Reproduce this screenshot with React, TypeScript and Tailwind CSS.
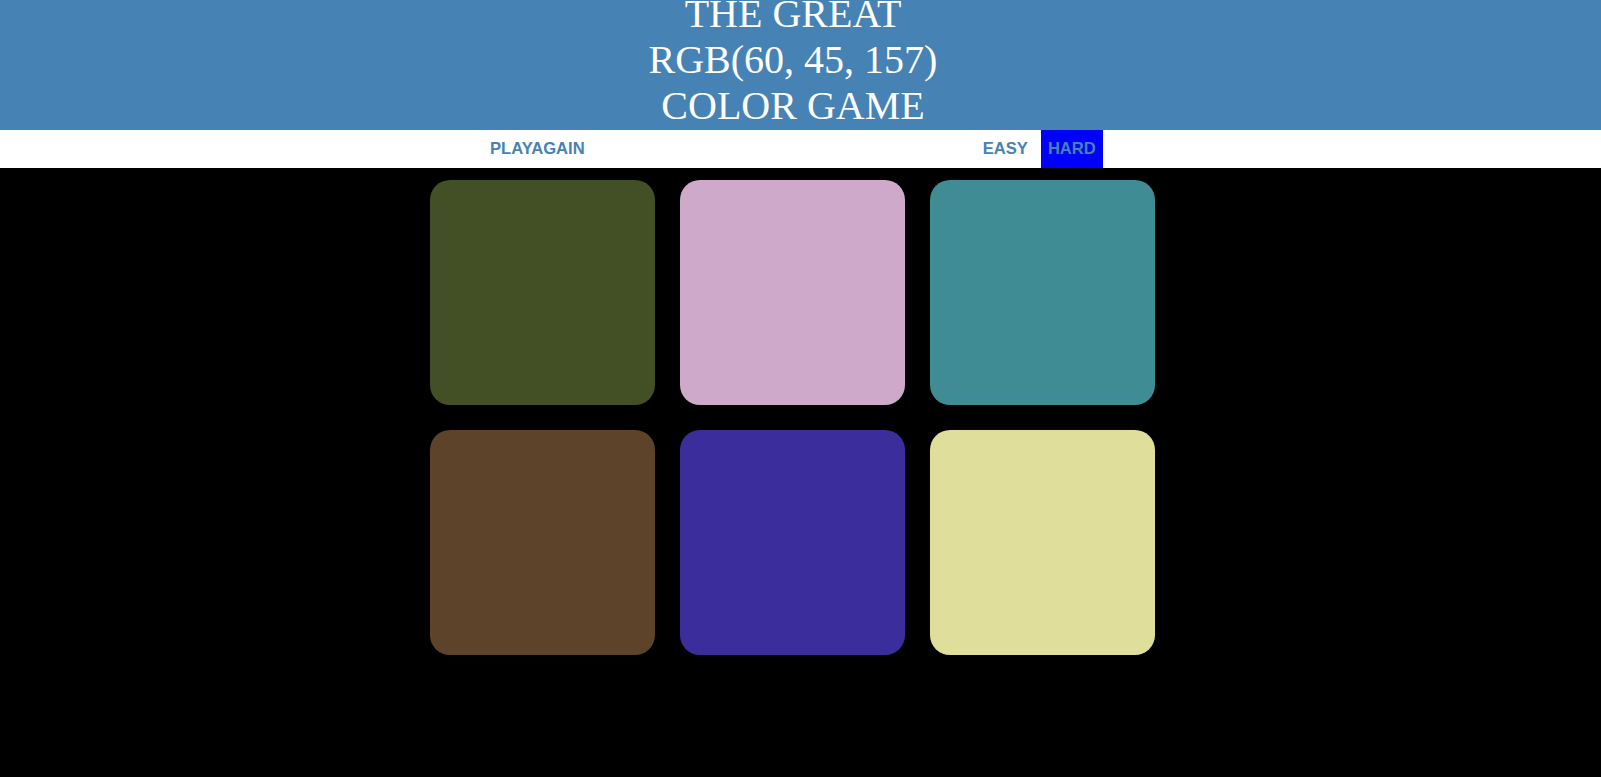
const squares = [
  "#434f24",
  "#cea9c9",
  "#3f8c94",
  "#5c432a",
  "#3c2d9d",
  "#dfdf9b",
];

export default function App() {
  return (
    <div className="min-h-[777px] bg-black">
      <header className="h-[130px] overflow-hidden bg-[#4682b4] pr-[15px] text-center text-white">
        <h1
          className="-mt-[9px] text-[40px] leading-[46px] font-normal uppercase"
          style={{ fontFamily: '"Liberation Serif", serif' }}
        >
          The Great
          <br />
          RGB(60, 45, 157)
          <br />
          Color Game
        </h1>
      </header>

      <div
        className="flex h-[38px] items-stretch bg-white text-[16.6px] font-bold uppercase text-[#4682b4]"
        style={{ fontFamily: '"Liberation Sans", Arial, sans-serif' }}
      >
        <div className="w-[481px]" />
        <button className="px-[9px] uppercase">Playagain</button>
        <div className="w-[380px]" />
        <button className="px-[9px] uppercase">Easy</button>
        <div className="w-[4px]" />
        <button className="bg-[#0000ff] px-[7px] uppercase">Hard</button>
      </div>

      <div className="ml-[430px] mt-[12px] grid w-[725px] grid-cols-3 gap-[25px]">
        {squares.map((c) => (
          <div
            key={c}
            className="h-[225px] w-[225px] rounded-[20px]"
            style={{ backgroundColor: c }}
          />
        ))}
      </div>
    </div>
  );
}
